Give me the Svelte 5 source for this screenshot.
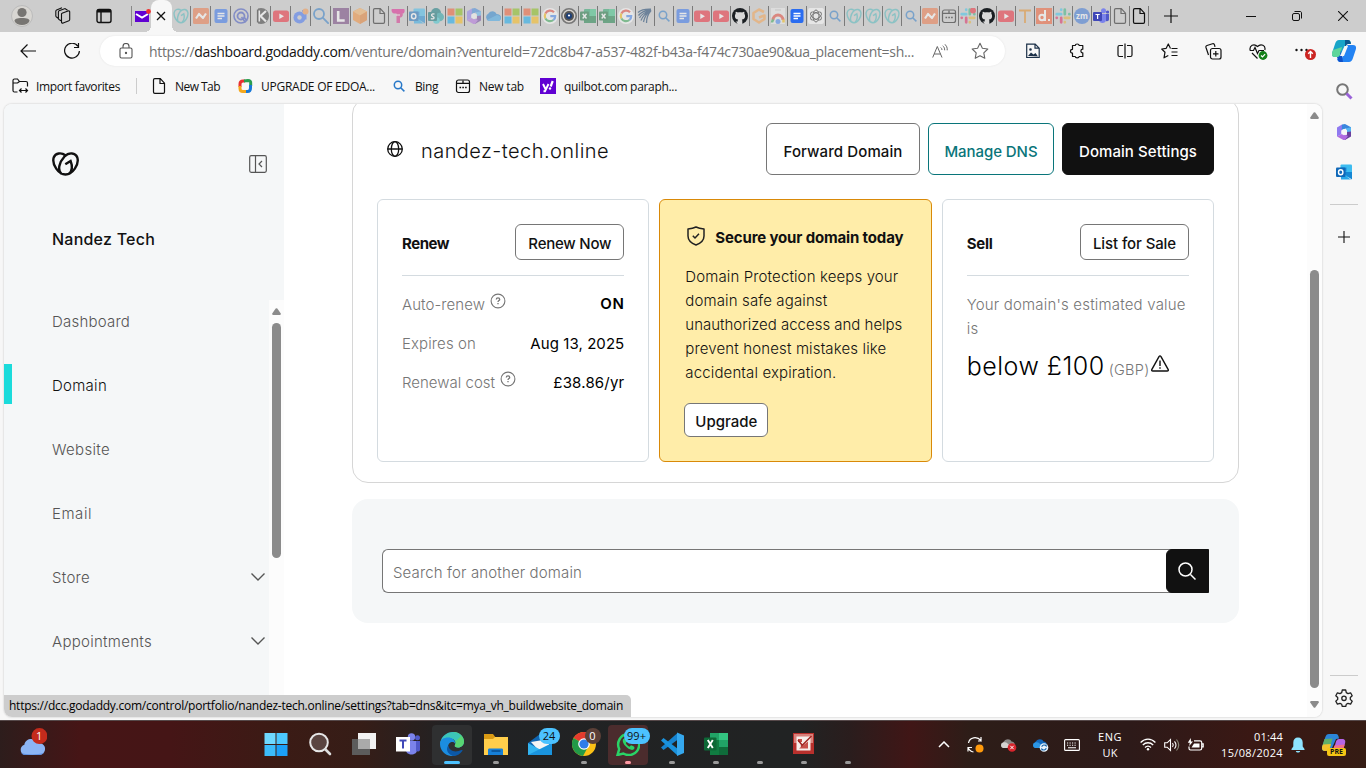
<script>
  const tabs = [
    'godaddy', 'nc', 'docs', 'quora', 'kcircle', 'youtube', 'dblue', 'searchbig', 'lpurple', 'cube',
    'page', 'tpink', 'outlook', 'sharepoint', 'windows', 'm365', 'onedrive', 'windows', 'windows', 'google',
    'eye!', 'excel', 'excel', 'google', 'wing', 'search', 'docs', 'youtube', 'youtube', 'github!',
    'gorange', 'webstore', 'docs!', 'openai', 'search', 'godaddy', 'godaddy', 'godaddy', 'search', 'nc',
    'newtab', 'slackdot', 'github!', 'youtube', 'torange', 'dred', 'slack', 'zoom', 'teams!', 'page', 'page!'
  ];
  const nav = [
    { label: 'Dashboard', w: 78 },
    { label: 'Domain', w: 55, active: true },
    { label: 'Website', w: 58 },
    { label: 'Email', w: 40 },
    { label: 'Store', w: 38, more: true },
    { label: 'Appointments', w: 100, more: true }
  ];
  const favorites = [
    { icon: 'page!', label: 'New Tab', w: 45, cell: 86 },
    { icon: 'ring', label: 'UPGRADE OF EDOA...', w: 114, cell: 154 },
    { icon: 'search!', label: 'Bing', w: 23, cell: 64 },
    { icon: 'newtab!', label: 'New tab', w: 45, cell: 85 },
    { icon: 'yahoo', label: 'quilbot.com paraph...', w: 113, cell: 150 }
  ];
  const apps = [
    { icon: 'start' }, { icon: 'find' }, { icon: 'taskview' }, { icon: 'teamsapp' },
    { icon: 'edge', state: 'active' }, { icon: 'folder', state: 'open' }, { icon: 'mailapp', badge: '24' },
    { icon: 'chrome', state: 'open', badge: '0', dark: true },
    { icon: 'whatsapp', state: 'alert', badge: '99+' },
    { icon: 'vscode', state: 'open' }, { icon: 'excelapp', state: 'open' }, { icon: '', state: 'open' },
    { icon: 'paint', state: 'open' }, { icon: '', state: 'open' }
  ];
  const copy = [
    ['Domain Protection keeps your', 213], ['domain safe against', 142],
    ['unauthorized access and helps', 217], ['prevent honest mistakes like', 201],
    ['accidental expiration.', 151]
  ];

  // Tracks a label so that it fills its set width.
  function fit(node, width) {
    const natural = node.getBoundingClientRect().width;
    node.style.letterSpacing = (width - natural) / node.textContent.length + 'px';
  }
</script>

{#snippet pic(name)}
  <svg viewBox="0 0 16 16" width="16" height="16" fill="none">
    {#if name === 'godaddy'}
      <g stroke="#4bb9bd" stroke-width="1.4"><path d="M8 2.3C5.6.4 2 1.2 1.2 4.3.3 8.700 4 14.700 8 14.700s7.700-6 6.800-10.400C14 1 9.800.5 7.200 3.500 4.500 6.700 3.800 12 5.300 13.800"/><path d="M8 7.600 10.800 5.800c1 3.200.2 6.200-1.500 8.300"/></g>
    {:else if name === 'nc'}
      <rect width="16" height="16" rx="1.500" fill="#ef7341"/><path d="M3 10.500 6 6l4 4 3-4.500" stroke="#fff" stroke-width="2.200" stroke-linejoin="round"/>
    {:else if name === 'docs'}
      <rect x="1.500" y="1" width="13" height="14" rx="2" fill="#2a6cf0"/><path d="M4.500 5.500h7M4.500 8h7M4.500 10.500h4.500" stroke="#fff" stroke-width="1.400"/>
    {:else if name === 'quora'}
      <g stroke="#3a4fc0"><circle cx="8" cy="8" r="7" stroke-width="1.600"/><circle cx="8" cy="8" r="3.500" stroke-width="1.800"/><path d="m8.500 9 4 5.500M11 9l3 4" stroke-width="1.600"/></g>
    {:else if name === 'kcircle'}
      <circle cx="8" cy="8" r="8" fill="#333"/><path d="M0 0h5v16H0z" fill="#cdcdcd"/><path d="M6 2.500v11M13 3 7.500 8l5.500 5.500" stroke="#fff" stroke-width="2.200"/><path d="M4.700 1.500v13" stroke="#222" stroke-width="1.600"/>
    {:else if name === 'youtube'}
      <rect y="2.500" width="16" height="11.500" rx="2.500" fill="#f02030"/><path d="m6.300 5.500 4.700 2.700-4.700 2.700z" fill="#fff"/>
    {:else if name === 'dblue'}
      <circle cx="6.500" cy="9.500" r="6" fill="#3c6ff5"/><circle cx="6.500" cy="9.500" r="2.200" fill="#ccc"/><path d="M9 3h3.500v8.500" stroke="#3c6ff5" stroke-width="2"/><circle cx="12.500" cy="3.500" r="3" fill="#f89548"/>
    {:else if name === 'searchbig'}
      <g stroke="#2878c8" stroke-width="1.800"><circle cx="6" cy="6" r="5"/><path d="m9.700 9.700 6 6"/></g>
    {:else if name === 'search'}
      <g stroke="#2878c8" stroke-width="1.500"><circle cx="7" cy="7" r="3.700"/><path d="m9.700 9.700 3.700 3.700"/></g>
    {:else if name === 'lpurple'}
      <rect width="16" height="16" fill="#6c3a78"/><path d="M5.200 3v9.500h6.500" stroke="#fff" stroke-width="2.600"/>
    {:else if name === 'cube'}
      <path d="m8 0 7 3.500v8.500l-7 4-7-4V3.500z" fill="#f58a30"/><path d="m1 3.500 7 4 7-4L8 0z" fill="#f9b15e"/><path d="m8 7.500 7-4V12l-7 4z" fill="#e67a28"/>
    {:else if name === 'page'}
      <path d="M2.500 2c0-.8.500-1.300 1.300-1.300h5.500l4.200 4.500V14c0 .8-.5 1.300-1.200 1.300H3.800c-.8 0-1.300-.5-1.300-1.300zM9 1v4.500h4.300" stroke="#111" stroke-width="1.200"/>
    {:else if name === 'tpink'}
      <path d="M2 1h12c1 0 1 4.500-1 4.500H4C1.500 5.500 1 1 2 1z" fill="#e2188e"/><path d="M6.500 5h6c1 2.500-.5 4.500-2.500 4.500V15H6.500z" fill="#d82888"/><path d="M6 7h4" stroke="#fff" stroke-width="1"/>
    {:else if name === 'outlook'}
      <rect x="4.500" y=".5" width="11.500" height="13" rx="1" fill="#3dbcf0"/><path d="M4.500 3.500h6v4h-6z" fill="#1a8fdc"/><path d="m5 8 11 7.500V8z" fill="#1487d4"/><path d="M5 15.500V9l10 6.500z" fill="#28a8ea"/><rect y="3.500" width="9.500" height="9.500" rx="1" fill="#0f68b8"/><ellipse cx="4.700" cy="8.300" rx="2.200" ry="2.500" stroke="#fff" stroke-width="1.400"/>
    {:else if name === 'sharepoint'}
      <circle cx="8" cy="5" r="5" fill="#057478"/><circle cx="11.700" cy="9" r="4.300" fill="#1aa1a5"/><circle cx="8.500" cy="12.500" r="3.300" fill="#37c6d0"/><rect y="4" width="9" height="9" rx="1" fill="#036c70"/><path d="M6.500 6.200C4 5 2.500 7 4.500 8.300c2.500 1 2 3.300-1.700 2.300" stroke="#fff" stroke-width="1.300"/>
    {:else if name === 'windows'}
      <path d="M.5.500h7v7h-7z" fill="#f35325"/><path d="M8.500.500h7v7h-7z" fill="#81bc06"/><path d="M.5 8.500h7v7h-7z" fill="#05a6f0"/><path d="M8.500 8.500h7v7h-7z" fill="#ffba08"/>
    {:else if name === 'm365'}
      <path d="M6 .6 1 3.500v9L6 10V5.500z" fill="#8f7af0"/><path d="M6 .6 9 0l6 3.300v3.500L9.500 4.500 5.800 6z" fill="#3a86dd"/><path d="M9.500 4.500 15 3.300v9l-4-2V6.500z" fill="#55b5f2"/><path d="M15 7.500v5L9 16l-2.500-1 4.500-4.500V8z" fill="#6b3f9e"/><path d="M1 12.500 7.500 16H9l3-4-3-1.300-3-.7z" fill="#b06be0"/><path d="m8 4.900 2.800 1.600v3.200L8 11.300 5.200 9.700V6.500z" fill="#f7f7f7"/>
    {:else if name === 'onedrive'}
      <path d="M4 13a4 4 0 0 1-.5-7.500C5.500 2.500 10 2.500 11.500 6 15 6 16.500 8.500 16 10.500c-.4 1.500-1.500 2.500-3 2.500z" fill="#2080d0"/><path d="M2 12 12 7c4 .5 5 4 2 6H4z" fill="#38a5ea"/>
    {:else if name === 'google'}
      <circle cx="8" cy="8" r="8" fill="#fff"/><g stroke-width="2.200"><path d="M12 4.300A5.300 5.300 0 0 0 3.400 5.500" stroke="#ea4335"/><path d="M3.400 5.500a5.300 5.300 0 0 0 0 5" stroke="#fbbc05"/><path d="M3.400 10.500a5.300 5.300 0 0 0 8 1.500" stroke="#34a853"/><path d="M11.400 12A5 5 0 0 0 13.200 8.200H8.300" stroke="#4285f4"/></g>
    {:else if name === 'eye'}
      <circle cx="8" cy="8" r="7.200" stroke="#777" stroke-width="1.600" fill="#d8d4d0"/><circle cx="8" cy="8" r="5" fill="#555"/><circle cx="8" cy="8" r="3" fill="#1d3f78"/><circle cx="8" cy="7.500" r="1.100" fill="#fff"/>
    {:else if name === 'excel'}
      <rect x="4" y="1" width="12" height="14" rx="1" fill="#21a366"/><path d="M10 1h6v7h-6z" fill="#33c481"/><path d="M4 8h12v7H4z" fill="#107c41"/><rect y="3.500" width="9" height="9" rx="1" fill="#0f7038"/><path d="m2.700 5.700 3.800 4.800m0-4.800-3.800 4.800" stroke="#fff" stroke-width="1.400"/>
    {:else if name === 'wing'}
      <g stroke="#0d3a68" stroke-width="1.300"><path d="M1 4.500C5 1 9 1 14 1.200M1.500 7.500C5 3 9 2.500 14 1.500M2.500 10C5 5.500 9 3.500 14 2M4 12.500C6 7.500 9 4.500 14 2M6.500 14C7.500 9 10 5 14 2M9.500 15c0-4 1.500-9 4.500-12.500"/></g>
    {:else if name === 'github'}
      <circle cx="8" cy="8" r="8" fill="#1b1f23"/><path d="M5.700 16v-2.600c-1.800.3-2.300-.5-2.800-1.500M10.300 16v-3c0-.8-.1-1.200-.5-1.500 2.300-.3 3.300-1.500 3.300-3.600 0-.9-.3-1.600-.8-2.200.2-.6.200-1.400-.1-2-.8 0-1.500.400-2.100.8-1.300-.3-2.900-.3-4.200 0-.6-.4-1.300-.8-2.100-.8-.3.600-.3 1.400-.1 2-.5.600-.8 1.300-.8 2.200 0 2.100 1 3.300 3.300 3.600-.4.300-.5.800-.5 1.500v3z" fill="#d8d8d8"/>
    {:else if name === 'gorange'}
      <path d="M13 4 8 1.500 2.500 5v6L8 14.500l5.500-3.500V7.500L8 9.500" stroke="#f8a04a" stroke-width="2.600" stroke-linejoin="round"/>
    {:else if name === 'webstore'}
      <path d="M1 0h14v16H1z" fill="#eee"/><path d="M5 2h6" stroke="#bbb"/><path d="M3 12a5 5 0 0 1 10 0" stroke="#e84335" stroke-width="3"/><path d="M2 14.500c0-1 .5-2 1.500-3" stroke="#34a853" stroke-width="2.500"/><path d="M13.500 11.500v3" stroke="#fbbc05" stroke-width="2.500"/><circle cx="8" cy="13.500" r="2.500" fill="#4285f4"/>
    {:else if name === 'openai'}
      <rect width="16" height="16" rx="2" fill="#fff"/><g stroke="#222" stroke-width="1"><ellipse cx="8" cy="8" rx="3" ry="6"/><ellipse cx="8" cy="8" rx="3" ry="6" transform="rotate(60 8 8)"/><ellipse cx="8" cy="8" rx="3" ry="6" transform="rotate(120 8 8)"/></g>
    {:else if name === 'newtab'}
      <rect x="1.500" y="2" width="13" height="12.500" rx="2" stroke="#111" stroke-width="1.200"/><path d="M2 5.300h6V2.500M8 5.300h6.500M4.500 9.500h1.600m1.200 0h1.600m1.200 0h1.600" stroke="#111" stroke-width="1.300"/>
    {:else if name === 'slack' || name === 'slackdot'}
      <g stroke-width="2.700" stroke-linecap="round"><path d="M1.700 6.200h4.500M6.200 1.700v.1" stroke="#36c5f0"/><path d="M9.800 1.700v4.500M14.300 6.200h.1" stroke="#2eb67d"/><path d="M9.800 9.800h4.500M9.800 14.200v.1" stroke="#ecb22e"/><path d="M6.200 9.800v4.500M1.700 9.800h.1" stroke="#e01e5a"/></g>
      {#if name === 'slackdot'}<circle cx="13" cy="2.500" r="3" fill="#f02030"/>{/if}
    {:else if name === 'torange'}
      <path d="M2 2.500h12M8 2.500V15" stroke="#e68a1c" stroke-width="1.800"/>
    {:else if name === 'dred'}
      <rect width="16" height="16" fill="#f3562a"/><circle cx="6" cy="9.500" r="2.700" stroke="#fff" stroke-width="2"/><path d="M9 2v11M12 12h2" stroke="#fff" stroke-width="2"/>
    {:else if name === 'zoom'}
      <circle cx="8" cy="8" r="8" fill="#3270d8"/><text x="8" y="10.800" text-anchor="middle" class="zm">zm</text>
    {:else if name === 'teams'}
      <circle cx="10.500" cy="2.800" r="2.500" fill="#7b83eb"/><circle cx="14.500" cy="4" r="1.600" fill="#5059c9"/><path d="M6 6h7v6c0 4-7 4-7 0z" fill="#7b83eb"/><path d="M13 6h3v5c0 2-1.500 2.500-3 2z" fill="#5059c9"/><rect y="4" width="9" height="9" rx="1" fill="#4048b8"/><path d="M2.500 6.500H6.700M4.600 6.500v4.500" stroke="#fff" stroke-width="1.200"/>
    {:else if name === 'ring'}
      <g stroke-width="3"><path d="M3 9V6c0-2 1-3 3-3h2" stroke="#e83030"/><path d="M7 3l4-.5c2 0 3 1 2.700 3V8" stroke="#2a9d50"/><path d="M13.500 7v3c0 2-1 3.500-3 3.500H8" stroke="#1878d8"/><path d="M9 13.500H6c-2 0-3-1-3-3V8" stroke="#f5a81c"/></g>
    {:else if name === 'yahoo'}
      <rect width="16" height="16" fill="#6001d2"/><path d="m3 6 2.500 5M8.500 6 5 13.200H3.500" stroke="#fff" stroke-width="1.900"/><path d="m12.700 3-2 5.500" stroke="#fff" stroke-width="2.200"/><circle cx="10" cy="10.500" r="1.200" fill="#fff"/>
    {/if}
  </svg>
{/snippet}

{#snippet app(name)}
  <svg viewBox="0 0 24 24" width="24" height="24" fill="none">
    {#if name === 'start'}
      <path d="M.5 1h11v11H.500z" fill="#6ed8ff"/><path d="M12.500 1h11v11h-11z" fill="#4cc8ff"/><path d="M.5 13h11v11H.500z" fill="#3cbcfb"/><path d="M12.500 13h11v11h-11z" fill="#1ba0f8"/>
    {:else if name === 'find'}
      <circle cx="11" cy="10.500" r="8.800" stroke="#e6e6e6" stroke-width="2" fill="#5a4440"/><path d="m17.500 17.500 4.500 4.500" stroke="#ddd" stroke-width="2.600" stroke-linecap="round"/>
    {:else if name === 'taskview'}
      <path d="M6 1h18v16H6z" fill="#f2f2f2"/><path d="M0 7h18v16H0z" fill="#5c5c5c"/><path d="M6 7h12v10H6z" fill="#aaa"/>
    {:else if name === 'teamsapp'}
      <circle cx="15.500" cy="5" r="3.700" fill="#7b83eb"/><circle cx="21.500" cy="5.700" r="2.500" fill="#5059c9"/><path d="M10 9h11v9c0 6-11 6-11 0z" fill="#7b83eb"/><path d="M20 9h4.500v7c0 3-2 4-4.500 3z" fill="#5059c9"/><path d="M0 5h14v14.500H0z" fill="#fff"/><path d="M3.500 8.500h7M7 8.500v8" stroke="#4048b8" stroke-width="2"/>
    {:else if name === 'edge'}
      <path d="M0 12C1 3 8 0 13 0c7 0 11 5 11 9.500 0 3.500-2.500 6-6 6-2.500 0-4-1-3-2.500C17 9 13 6 9 6.500 5 7 1.500 9 0 12z" fill="#36c0cf"/><path d="M14 0c6 .5 10 5 10 9.500 0 3.500-2.500 6-6 6-2.500 0-4-1-3-2.500 1.500-2.500.5-4.500-1-6z" fill="#58d673"/><path d="M9 1c5-2 10 0 12 3l-5 5C13 5 7 4.500 2.500 7.500 4 4 6 2 9 1z" fill="#3cc6b8"/><path d="M0 12c0-4.500 4-6.500 8-6.500 4.500 0 7.500 3 7 6C13 8.500 8 10.500 8 15c0 5 4 8.500 8 8.500C7 26 0 19.500 0 12z" fill="#1b8de0"/><path d="M8.500 13.500C9 19 15 21 21.500 18c.7-.3 1.300.2.8 1-2 3-5.500 5-9.500 5C7 22 5.500 16 8.500 13.500z" fill="#0c58a6"/>
    {:else if name === 'folder'}
      <path d="M0 2h9l3 4h12v17H0z" fill="#d99a14"/><path d="M0 7h9l2-2h13v18H0z" fill="#ffce4b"/><path d="M4 23v-5c0-1 .5-1.500 1.500-1.500h12c1 0 1.500.5 1.500 1.500v5z" fill="#1680d8"/><path d="M7.500 19h9" stroke="#084e90" stroke-width="1.500"/>
    {:else if name === 'mailapp'}
      <path d="M0 11 12 2l12 9v12H0z" fill="#1065b0"/><path d="m3 10 18-3v8l-9 5z" fill="#f5f5f5"/><path d="m0 11 13 7 11-7v12H0z" fill="#33b4f0"/><path d="m0 23 24-12v12z" fill="#1a94de"/>
    {:else if name === 'chrome'}
      <circle cx="12" cy="12" r="12" fill="#fbc116"/><path d="M12 12 1.600 6a12 12 0 0 1 20.800 0z" fill="#e33b2e"/><path d="m12 12-10.400-6A12 12 0 0 0 11 24l5-9z" fill="#229a48"/><path d="M12 6h10.400L12 12z" fill="#e33b2e"/><circle cx="12" cy="12" r="5.800" fill="#fff"/><circle cx="12" cy="12" r="4.600" fill="#2f7de9"/>
    {:else if name === 'whatsapp'}
      <path d="m1.500 23 1.700-6A10.500 10.500 0 1 1 7.300 21.500z" stroke="#29d366" stroke-width="2.500"/><path d="M8 6.500c-2 1-1.500 4 1 7s6 5 8 4.300 2-3 0-3.700l-2-.8-1.500 1.500c-2-1-3-2-3.700-3.700l1.200-1.500L10 7c-.3-.7-1-.8-2-.5z" fill="#29d366"/>
    {:else if name === 'vscode'}
      <path d="M17.500 1 1 15.500l2.500 2.500L20 6z" fill="#1683cf"/><path d="M17.500 23.500 1 8.500 3.500 6 20 18.500z" fill="#1a92dd"/><path d="m17 .5 7 3v17.500l-7 3z" fill="#35a8ee"/>
    {:else if name === 'excelapp'}
      <path d="M6 1h18v22H6z" fill="#21a366"/><path d="M15 1h9v7h-9z" fill="#33c481"/><path d="M6 8h9v15H6z" fill="#107c41"/><path d="M15 15h9v8h-9z" fill="#0f6b3a"/><rect y="5.500" width="12.500" height="13" rx="1" fill="#0d6836"/><path d="m3.800 8 5 8m0-8-5 8" stroke="#fff" stroke-width="1.900"/>
    {:else if name === 'paint'}
      <path d="M1 1h21v21H1z" fill="#b8302c"/><path d="M2 2h19v9H2z" fill="#d8807a"/><path d="M4.500 4.500h14v14h-14z" fill="#f6eeea"/><path d="M6 7h4v3H6zM7 16.500l9-7v7z" fill="#c8504a"/><path d="M19.500 4 9 14.500M6 8l4 5" stroke="#a02420" stroke-width="1.500"/>
    {/if}
  </svg>
{/snippet}

{#snippet tabPic(name)}
  {@render pic(name.replace('!', ''))}
{/snippet}

{#snippet help()}
  <svg class="help" viewBox="0 0 16 16" width="16" height="16" fill="none" stroke="#767676"><circle cx="8" cy="8" r="6.900" stroke-width="1.100"/><path d="M6.300 6.600c0-1.100.7-1.700 1.700-1.700s1.700.6 1.700 1.500c0 1.200-1.700 1.200-1.700 2.500M8 10v1.200" stroke-width="1.300"/></svg>
{/snippet}

{#snippet copilot()}
  <svg viewBox="0 0 24 22" width="24" height="22"><path d="M7 0h9c2 0 2.500 1.500 3 3l-5 1-4 11c-.6 1.500-1.500 2-3 2H3c-3 0-3.500-2-2.800-4.500l3-9C4 1.200 5 0 7 0z" fill="#18a5c8"/><path d="m1 10 9-3-2 8c-.6 1.500-1.500 2-3 2H3c-3 0-3.500-2-2.800-4.500z" fill="#5fd69a"/><path d="M17 22H8c-2 0-2.500-1.500-3-3l5-1 4-11c.6-1.500 1.500-2 3-2h4c3 0 3.500 2 2.800 4.500l-3 9C20 20.800 19 22 17 22z" fill="#2383f3"/><path d="M13 0h3c2 0 2.500 1.500 3 4h-2c-1.500 0-2.400.5-3 2l-1 2z" fill="#0a5990"/><path d="m9 10-1 5c-.6 1.500-1 2-3 2l1 3c.5 1.500 1.500 2 3 2h2z" fill="#0f50c8"/><path d="M12.500 6h3.500l-4 10H8z" fill="#f7f7f7"/></svg>
{/snippet}

<div class="screen">
  <div class="tabbar">
    <div class="profile">
      <svg viewBox="0 0 22 22" width="22" height="22"><circle cx="11" cy="11" r="10.500" fill="#d8d6d2" stroke="#bbb"/><circle cx="11" cy="7.500" r="4.600" fill="#777572"/><path d="M3.500 16c0-2 2-3 7.500-3s7.500 1 7.500 3c-1 2.500-4 4-7.500 4s-6.500-1.500-7.500-4z" fill="#777572"/></svg>
    </div>
    <svg class="spaces" viewBox="0 0 18 18" width="18" height="18" fill="none" stroke="#111" stroke-width="1.100"><path d="m9 6.300 6-2.300c1-.3 1.700.1 1.700 1v7.500c0 .7-.3 1-.8 1.200l-5.700 2.300c-1 .4-1.700 0-1.700-1V7c0-.4.2-.6.500-.7zM8.500 14 6 12.500c-.4-.3-.6-.6-.6-1V5c0-.6.2-1 .7-1.200L12 1.500l2.500 1.800M5.500 11.500l-2-1.500c-.5-.4-.7-.7-.7-1.300V4.200c0-.6.300-1 .8-1.200L9 .8"/></svg>
    <svg class="panel" viewBox="0 0 16 16" width="16" height="16" fill="none" stroke="#111" stroke-width="1.400"><rect x="1" y="1.500" width="14" height="13" rx="2"/><path d="M1 3h14" stroke-width="3"/><path d="M5 4v10"/></svg>
    <div class="mailtab">
      <svg viewBox="0 0 17 14" width="17" height="14"><path d="M1 2h14v11H1z" fill="#6001d2"/><path d="m2 5 6 3.500L14 5" stroke="#fff" stroke-width="2" fill="none"/><circle cx="14.500" cy="2.500" r="2.400" fill="#f03030"/></svg>
    </div>
    <div class="current">
      <svg viewBox="0 0 10 10" width="10" height="10" stroke="#111" stroke-width="1.300"><path d="m1 1 8 8M9 1 1 9"/></svg>
    </div>
    {#each tabs as t, i}
      <div class="tab" class:wide={i > 0 && i < 9} class:vivid={t.endsWith('!')}>{@render tabPic(t)}</div>
    {/each}
    <svg class="plus" viewBox="0 0 14 14" width="14" height="14" stroke="#111" stroke-width="1.200"><path d="M7 0v14M0 7h14"/></svg>
    <div class="wincontrols">
      <svg viewBox="0 0 10 10" width="10" height="10" stroke="#111"><path d="M0 5.500h10"/></svg>
      <svg viewBox="0 0 10 10" width="10" height="10" fill="none" stroke="#111"><rect x=".5" y="2.500" width="7" height="7" rx="1.500"/><path d="M2.500.500H8c1 0 1.500.5 1.500 1.500v5.500"/></svg>
      <svg viewBox="0 0 10 10" width="10" height="10" stroke="#111" stroke-width="1.100"><path d="m0 0 10 10M10 0 0 10"/></svg>
    </div>
  </div>

  <div class="toolbar">
    <svg class="back" viewBox="0 0 16 14" width="16" height="14" fill="none" stroke="#111" stroke-width="1.200"><path d="M16 7H1M7.500.500 1 7l6.500 6.500"/></svg>
    <svg class="reload" viewBox="0 0 16 16" width="16" height="16" fill="none" stroke="#111" stroke-width="1.200"><path d="M14 3.300A7.400 7.400 0 1 0 15.400 8M14.500 0v4.500H10"/></svg>
    <div class="address">
      <svg viewBox="0 0 14 16" width="14" height="16" fill="none" stroke="#555" stroke-width="1.100"><rect x="1" y="5" width="12" height="10" rx="1.500"/><path d="M4 5V3.500a3 3 0 0 1 6 0V5"/><circle cx="7" cy="10" r=".6" fill="#555"/></svg>
      <span class="url"><span use:fit={765}>https://<b>dashboard.godaddy.com</b>/venture/domain?ventureId=72dc8b47-a537-482f-b43a-f474c730ae90&amp;ua_placement=sh...</span></span>
      <svg class="read" viewBox="0 0 16 14" width="16" height="14" fill="none" stroke="#666" stroke-width="1"><path d="m.7 13.500 4.600-11 4.700 11M2.200 10h6.200M8.700 3.500c.8.500 1.200 1.400 1.300 2.500M10.700 1.800c1.300 1 2 2.400 2 4.500M12.500 0c2 1.500 3 3.700 2.700 6.300"/></svg>
      <svg viewBox="0 0 18 18" width="18" height="18" fill="none" stroke="#666" stroke-width="1.100" stroke-linejoin="round"><path d="m9 1.300 2.400 5 5.400.7-4 3.800 1 5.500L9 13.700l-4.800 2.600 1-5.500-4-3.800 5.400-.7z"/></svg>
    </div>
    <div class="tools">
      <svg class="t1" viewBox="0 0 16 16" width="16" height="16" fill="none" stroke="#1b3048" stroke-width="1.200"><path d="M1.700 1.200h8.500l4 4v9.300H1.700zM10 1.200v4h4"/><path d="m3 13 3-3.500 2.500 2 2-1.500L13 13.500z" fill="#1b3048" stroke="none"/><circle cx="5.500" cy="6.500" r=".7"/></svg>
      <svg class="t2" viewBox="0 0 16 16" width="16" height="16" fill="none" stroke="#111" stroke-width="1.200" stroke-linejoin="round"><path d="M3.500 2.500H6.200c.2-2 3.800-2 4 0h3.600v3.700c-2.500-.3-2.500 3.900 0 3.600v3.700h-3.600c-.2 1.800-3.800 1.800-4 0H3.500V10C.8 10 .8 6.300 3.500 6.300z"/></svg>
      <i></i>
      <svg class="t3" viewBox="0 0 16 16" width="16" height="16" fill="none" stroke="#111" stroke-width="1.200"><path d="M6 2.500H2.500c-1 0-1.500.5-1.500 1.500v8c0 1 .5 1.500 1.500 1.500H6M10 2.500h3.500c1 0 1.500.5 1.500 1.500v8c0 1-.5 1.500-1.500 1.500H10M8 .500v15"/></svg>
      <svg class="t4" viewBox="0 0 17 16" width="17" height="16" fill="none" stroke="#111" stroke-width="1.200" stroke-linejoin="round"><path d="M9.500 5.500 7.300 1 5.200 5.300.7 6l3.300 3.200-1 5.600 4.300-2.300M10.500 5.500h6M10.500 9h6M10.500 12.500h6"/></svg>
      <svg class="t5" viewBox="0 0 17 17" width="17" height="17" fill="none" stroke="#111" stroke-width="1.200"><rect x="5.500" y="5.500" width="10.500" height="10.500" rx="2"/><path d="M10.800 8v5.500M8 10.800h5.500M3.500 12 1 4.500c-.3-1 0-1.700 1-2L7.500.800c1-.3 1.700 0 2 1l.5 2"/></svg>
      <svg class="t6" viewBox="0 0 19 17" width="19" height="17" fill="none" stroke="#111" stroke-width="1.200"><path d="M1.200 7.500C0 2.500 5 0 8.500 3.500 12 0 17 2.500 15.800 7M1 7.500h3.500L6 4.500l2.500 6 1.500-3h5M3 10l5.500 5.500"/><circle cx="14" cy="12.500" r="4.400" fill="#138018" stroke="none"/><path d="m12 12.500 1.500 1.500 2.600-2.800" stroke="#fff"/></svg>
      <svg class="t7" viewBox="0 0 22 17" width="22" height="17"><g fill="#111"><circle cx="2.500" cy="7" r="1.200"/><circle cx="7.500" cy="7" r="1.200"/><circle cx="12.500" cy="7" r="1.200"/></g><circle cx="16.500" cy="11.500" r="5.500" fill="#cc2522"/><path d="M16.500 15V8.500m-2.300 2.300 2.300-2.300 2.300 2.300" fill="none" stroke="#fff" stroke-width="1.400"/></svg>
    </div>
    <span class="copilot">{@render copilot()}</span>
  </div>

  <div class="favbar">
    <div class="imp">
      <svg viewBox="0 0 17 16" width="17" height="16" fill="none" stroke="#111" stroke-width="1.200"><path d="M5.500 14H2.500C1.500 14 1 13.500 1 12.500V2.500C1 1.500 1.500 1 2.500 1h3l2 2.500H14c1 0 1.500.5 1.500 1.500v3.500M1 5h4.500l2-1.500M7.500 12.500h8M9.500 10.500l-2 2 2 2M13.500 10.500l2 2-2 2"/></svg>
      <span use:fit={84}>Import favorites</span>
    </div>
    {#each favorites as f}
      <div class="fav" style:width="{f.cell}px">{@render tabPic(f.icon)}<span use:fit={f.w}>{f.label}</span></div>
    {/each}
  </div>

  <div class="middle">
    <div class="page">
      <aside>
        <div class="brand">
          <svg viewBox="0 0 27 24" width="27" height="24" fill="none" stroke="#111" stroke-width="2.400"><path d="M13.300 3.300C9.500.2 3.500.8 1.700 5.500-.3 12.500 6.500 22.500 13.500 22.500s14-10 11.800-17C23.500.500 17 0 12.500 4.500 7 10.500 5.300 18 9.500 21.800"/><path d="M13.300 12.300 18.600 9c2 5 1.400 10-1.600 13"/></svg>
          <svg viewBox="0 0 18 18" width="18" height="18" fill="none" stroke="#555" stroke-width="1.200"><rect x=".7" y=".7" width="16.600" height="16.600" rx="1.500"/><path d="M6.500 1v16M13 6l-3 3 3 3"/></svg>
        </div>
        <h2><span use:fit={103}>Nandez Tech</span></h2>
        <div class="navwrap">
          <nav>
            {#each nav as n}
              <div class="item" class:active={n.active}>
                <span use:fit={n.w}>{n.label}</span>
                {#if n.more}<svg viewBox="0 0 14 8" width="14" height="8" fill="none" stroke="#555" stroke-width="1.400"><path d="m.5.500 6.500 6.500L13.500.500"/></svg>{/if}
              </div>
            {/each}
          </nav>
          <div class="track small"><svg viewBox="0 0 9 7" width="9" height="7"><path d="M3.700.600.200 5.600Q0 7 1.300 7h6.400Q9 7 8.800 5.600L5.300.600Q4.500-.3 3.700.600z" fill="#8b8b8b"/></svg><div class="thumb"></div></div>
        </div>
      </aside>
      <main>
        <section class="domain">
          <header>
            <svg viewBox="0 0 16 16" width="16" height="16" fill="none" stroke="#111" stroke-width="1.300"><circle cx="8" cy="8" r="7.300"/><ellipse cx="8" cy="8" rx="3.700" ry="7.300"/><path d="M.7 8h14.600"/></svg>
            <h1><span use:fit={188}>nandez-tech.online</span></h1>
            <button class="fwd"><span use:fit={119}>Forward Domain</span></button>
            <button class="dns"><span use:fit={93}>Manage DNS</span></button>
            <button class="set"><span use:fit={118}>Domain Settings</span></button>
          </header>
          <div class="boxes">
            <article>
              <div class="head"><h3><span use:fit={47}>Renew</span></h3><button class="renew"><span use:fit={83}>Renew Now</span></button></div>
              <dl>
                <div><dt><span use:fit={83}>Auto-renew</span>{@render help()}</dt><dd class="on"><span use:fit={24}>ON</span></dd></div>
                <div><dt><span use:fit={74}>Expires on</span></dt><dd><span use:fit={94}>Aug 13, 2025</span></dd></div>
                <div><dt><span use:fit={93}>Renewal cost</span>{@render help()}</dt><dd><span use:fit={71}>£38.86/yr</span></dd></div>
              </dl>
            </article>
            <article class="secure">
              <div class="title">
                <svg viewBox="0 0 20 20" width="20" height="20" fill="none" stroke="#222" stroke-width="1.500" stroke-linejoin="round"><path d="M10 1c2.500 1.200 5 1.700 8 2v7c0 4-3.500 7.300-8 9-4.500-1.700-8-5-8-9V3c3-.3 5.500-.8 8-2z"/><path d="m6.800 9.800 2.200 2.200 4-4.200"/></svg>
                <h3><span use:fit={188}>Secure your domain today</span></h3>
              </div>
              <p>{#each copy as [line, w]}<span class="line"><span use:fit={w}>{line}</span></span>{/each}</p>
              <button class="up"><span use:fit={62}>Upgrade</span></button>
            </article>
            <article>
              <div class="head"><h3><span use:fit={26}>Sell</span></h3><button class="list"><span use:fit={83}>List for Sale</span></button></div>
              <p class="est"><span class="line"><span use:fit={219}>Your domain's estimated value</span></span><span class="line"><span use:fit={12}>is</span></span></p>
              <div class="value">
                <strong><span use:fit={138}>below £100</span></strong>
                <small><span use:fit={41}>(GBP)</span></small>
                <svg viewBox="0 0 18 17" width="18" height="17" fill="none" stroke="#111" stroke-width="1.400" stroke-linejoin="round"><path d="M8 1.600.9 14.300q-.7 1.700 1 1.700h14.200q1.700 0 1-1.700L10 1.600q-1-1.400-2 0zM9 5.500v5.500M9 12.300v1.500"/></svg>
              </div>
            </article>
          </div>
        </section>
        <section class="find">
          <div class="field"><span use:fit={189}>Search for another domain</span></div>
          <button class="go"><svg viewBox="0 0 18 18" width="18" height="18" fill="none" stroke="#fff" stroke-width="1.500"><circle cx="7.500" cy="7.500" r="6.500"/><path d="m12.500 12.500 5 5"/></svg></button>
        </section>
      </main>
      <div class="track big">
        <svg viewBox="0 0 9 7" width="9" height="7"><path d="M3.700.600.200 5.600Q0 7 1.300 7h6.400Q9 7 8.800 5.600L5.300.600Q4.500-.3 3.700.600z" fill="#8b8b8b"/></svg>
        <div class="thumb"></div>
        <svg viewBox="0 0 9 7" width="9" height="7"><path d="M3.700 6.400.200 1.400Q0 0 1.300 0h6.400Q9 0 8.800 1.400L5.300 6.400Q4.500 7.300 3.700 6.400z" fill="#8b8b8b"/></svg>
      </div>
      <div class="status"><span use:fit={614}>https://dcc.godaddy.com/control/portfolio/nandez-tech.online/settings?tab=dns&amp;itc=mya_vh_buildwebsite_domain</span></div>
    </div>
    <div class="rail">
      {@render railIcons()}
    </div>
  </div>

  <div class="taskbar">
    <div class="weather">
      <svg viewBox="0 0 26 26" width="28" height="28"><path d="M5 25a5 5 0 0 1 0-9.500c1-6.500 10-7 12.500-1.500 5 0 7.500 3 6.500 7-.6 2.500-2.500 4-5 4z" fill="#8cb5f5"/><path d="M2 23c4 2 16 2 21 0-1 1.500-2.500 2-4 2H5c-1 0-2-.5-3-2z" fill="#5f8fe0"/><circle cx="19" cy="7.500" r="7.400" fill="#c42b1c"/></svg>
      <em>1</em>
    </div>
    <div class="apps">
      {#each apps as a}
        <div class="app {a.state ?? ''}">
          {@render app(a.icon)}
          {#if a.badge}<em class:dark={a.dark} class:long={a.badge.length > 2}>{a.badge}</em>{/if}
        </div>
      {/each}
    </div>
    <div class="tray">
      <svg viewBox="0 0 12 7" width="12" height="7" fill="none" stroke="#fff" stroke-width="1.500"><path d="m1 6 5-5 5 5"/></svg>
      <svg class="sync" viewBox="0 0 17 17" width="17" height="17" fill="none" stroke="#fff" stroke-width="1.200"><path d="M1.500 7C2.500 1 10 0 14 4.500V1M14.500 5H11M1 15.500v-4h4M1 11.500C2 14 3.500 15.500 6.500 16"/><circle cx="12.500" cy="12.500" r="4" fill="#ff9a0c" stroke="none"/></svg>
      <svg class="c1" viewBox="0 0 17 14" width="17" height="14"><path d="M3 10a2.900 2.900 0 0 1 0-5.500C5 .5 10 0 11.500 3.500 15 3.500 16 8 13.500 10z" fill="#8b8886"/><path d="M3 10a2.900 2.900 0 0 1 0-5.500c3-1 5 .5 9 5.500z" fill="#d5d2d0"/><circle cx="12" cy="9.500" r="4.300" fill="#d8242c"/><path d="m10.300 7.800 3.400 3.400m0-3.400-3.400 3.400" stroke="#fff"/></svg>
      <svg class="c2" viewBox="0 0 17 14" width="17" height="14"><path d="M3 10a2.900 2.900 0 0 1 0-5.500C5 .5 10 0 11.500 3.500 15 3.500 16 8 13.500 10z" fill="#1268bc"/><path d="M3 10a2.900 2.900 0 0 1 0-5.500c3-1 5 .5 9 5.500z" fill="#2c96e4"/><circle cx="12" cy="9.500" r="4.300" fill="#e8f3fc"/><path d="M9.700 8.700a2.600 2.600 0 0 1 4.400-.8V6.500M14.300 10.300a2.600 2.600 0 0 1-4.400.8v1.400" fill="none" stroke="#1060a8" stroke-width="1.100"/></svg>
      <svg class="kb" viewBox="0 0 16 12" width="16" height="12" fill="none" stroke="#fff" stroke-width="1.100"><rect x=".6" y=".6" width="14.800" height="10.800" rx="1"/><path d="M3 4h1.200m1.300 0h1.200m1.300 0h1.200m1.300 0h1.200M3 6.300h1.200m1.300 0h1.200m1.300 0h1.200m1.300 0h1.200M4 8.700h8"/></svg>
      <div class="lang"><span use:fit={24}>ENG</span><span use:fit={15}>UK</span></div>
      <svg class="wifi" viewBox="0 0 16 13" width="16" height="13" fill="none" stroke="#fff" stroke-width="1.300"><path d="M.6 4.500C5 0 11 0 15.400 4.500M2.800 7c3-3 7.400-3 10.400 0M5 9.500c1.800-1.700 4.200-1.700 6 0"/><circle cx="8" cy="11.300" r="1.200" fill="#fff" stroke="none"/></svg>
      <svg class="vol" viewBox="0 0 16 14" width="16" height="14" fill="none" stroke="#fff" stroke-width="1.100"><path d="M.7 4.800h2.500L6.500 1.500v11L3.200 9.200H.700zM8.500 5q1.500 2 0 4M10.500 3.300q3 3.700 0 7.400"/><path d="M12.500 1.500q4.500 5.500 0 11" stroke="#887"/></svg>
      <svg class="bat" viewBox="0 0 17 13" width="17" height="13" fill="none" stroke="#fff" stroke-width="1.200"><path d="M7 2.800h6c1 0 1.700.6 1.700 1.500v6c0 1-.7 1.700-1.700 1.700H3.500C2.500 12 2 11.300 2 10.300V8.500M15 5.800h1.200v3H15"/><path d="M3.700 0 .8 4.700h2L2.200 8 6 3.500H4z" fill="#fff" stroke="none"/><path d="M7 5.500h5.500v4H4.500z" fill="#fff"  stroke="none"/></svg>
      <div class="clock"><span use:fit={29}>01:44</span><span use:fit={62}>15/08/2024</span></div>
      <svg class="bell" viewBox="0 0 14 16" width="14" height="16" fill="#8ee4ff"><path d="M7 .500c3 0 4.700 2 4.700 5v4L13.500 12v1H.500v-1l1.800-2.500v-4c0-3 1.700-5 4.700-5zM4.800 14h4.400c-.5 2-3.900 2-4.400 0z"/></svg>
      <div class="pre">
        <svg viewBox="0 0 24 22" width="24" height="22"><path d="M7 0h7c2 0 2.500 1.500 3 4.500l-3 .5-4 9c-.6 1.500-1.500 3-3 3H3c-3 0-3.500-2-2.800-4.500l3-9C4 1 5 0 7 0z" fill="#2b86d8"/><path d="m2.500 5 8-.5-2.500 9c-1 2-2 3.500-5 3.500S-.5 14.500.2 12.500z" fill="#5fae6a"/><path d="m1 10.500 8-.5-1 3.500c-1 2-2 3.500-5 3.500S-.5 14.500.2 12.500z" fill="#f2c22e"/><path d="M14 7.500c.6-1.500 1.500-2.500 3-2.500h3c3 0 3.700 1.500 3 4.500L20 18h-9z" fill="#b565e8"/><path d="m12.500 11.500 10.300-1L20.500 18H10z" fill="#f0708a"/></svg>
        <em>PRE</em>
      </div>
    </div>
  </div>
</div>

{#snippet railIcons()}
  <svg viewBox="0 0 17 17" width="17" height="17" fill="none"><circle cx="6.500" cy="6.500" r="5.300" stroke="#777" stroke-width="2"/><path d="m10.500 10.500 5 5" stroke="#9a62d8" stroke-width="3"/></svg>
  <span>{@render pic('m365')}</span>
  <span>{@render pic('outlook')}</span>
  <i></i>
  <svg class="add" viewBox="0 0 12 12" width="12" height="12" stroke="#111" stroke-width="1.100"><path d="M6 0v12M0 6h12"/></svg>
  <i class="low"></i>
  <svg class="gear" viewBox="0 0 18 18" width="18" height="18" fill="none" stroke="#222" stroke-width="1.300" stroke-linejoin="round"><path d="M7.300 1h3.400l.6 2.600 1.700 1 2.600-.8 1.600 2.900-1.900 1.800v1.900l1.900 1.800-1.600 2.900-2.600-.8-1.700 1-.6 2.200H7.300l-.6-2.200-1.700-1-2.600.8-1.600-2.900 1.900-1.800V8.500L.8 6.700l1.600-2.900 2.600.8 1.700-1z"/><circle cx="9" cy="9.300" r="2.200"/></svg>
{/snippet}

<style>
  :global(body) { margin: 0; overflow: hidden; background: #f7f7f7; }
  .screen { width: 1366px; height: 768px; display: flex; flex-direction: column; background: #f7f7f7; font-family: "Open Sans", "Noto Sans", sans-serif; font-size: 12px; color: #111; overflow: hidden; }
  .screen * { box-sizing: border-box; }
  svg { display: block; flex: none; }
  span { white-space: nowrap; }
  h1, h2, h3, p, dl, dd { margin: 0; font-weight: 400; }
  em { font-style: normal; }
  button { font: inherit; padding: 0; display: flex; align-items: center; justify-content: center; background: #fff; border: 1px solid #767676; border-radius: 6px; color: #111; }

  .tabbar { height: 32px; background: #cdcdcd; display: flex; align-items: center; flex: none; }
  .profile { margin-left: 11px; }
  .spaces { margin-left: 20px; }
  .panel { margin-left: 25px; margin-right: 19px; }
  .mailtab { width: 20px; height: 20px; border-left: 1px solid #888; display: flex; align-items: center; padding-left: 2px; }
  .current { width: 21px; height: 32px; background: #f7f7f7; border-radius: 8px 8px 0 0; display: flex; align-items: center; justify-content: center; position: relative; padding-right: 1px; }
  .current::before, .current::after { content: ""; position: absolute; bottom: 0; width: 6px; height: 6px; }
  .current::before { left: -6px; background: radial-gradient(circle at 0 0, transparent 6px, #f7f7f7 6px); }
  .current::after { right: -6px; background: radial-gradient(circle at 100% 0, transparent 6px, #f7f7f7 6px); }
  .tab { width: 19px; height: 20px; border-right: 1px solid #7a7a7a; display: flex; align-items: center; justify-content: center; flex: none; }
  .tab.wide { width: 20px; }
  .tab svg { opacity: 0.5; }
  .tab.vivid svg { opacity: 1; }
  .zm { font: 700 8px "Open Sans", sans-serif; fill: #fff; }
  .plus { margin-left: 15px; }
  .wincontrols { margin-left: auto; margin-right: 18px; display: flex; gap: 36px; }

  .toolbar { height: 38px; display: flex; align-items: center; flex: none; }
  .back { margin-left: 20px; }
  .reload { margin-left: 28px; margin-right: 20px; }
  .address { width: 905px; height: 30px; border-radius: 15px; background: #fff; box-shadow: 0 0 2px #e2e2e2; display: flex; align-items: center; padding-left: 19px; }
  .url { margin-left: 16px; width: 783px; font-size: 14px; color: #717171; }
  .url b { font-weight: 400; color: #111; }
  .read { margin-right: 23px; }
  .tools { display: flex; align-items: center; margin-left: 20px; width: 291px; }
  .tools i { width: 1px; height: 16px; background: #ccc; margin-left: 16px; }
  .t2 { margin-left: 28px; }
  .t3 { margin-left: 16px; }
  .t4 { margin-left: 28px; }
  .t5 { margin-left: 27px; }
  .t6 { margin-left: 27px; }
  .t7 { margin-left: 26px; }
  .copilot { margin-left: 16px; }

  .favbar { height: 34px; display: flex; align-items: center; padding-bottom: 2px; flex: none; }
  .imp { display: flex; align-items: center; gap: 7px; margin-left: 12px; width: 125px; height: 16px; border-right: 1px solid #ccc; margin-right: 14px; }
  .fav { display: flex; align-items: center; gap: 8px; }

  .middle { height: 616px; display: flex; flex: none; }
  .page { width: 1318px; height: 613px; margin-left: 4px; background: #fff; border-radius: 8px; box-shadow: 0 0 2px #bbb; display: flex; overflow: hidden; position: relative; font-family: Inter, "Liberation Sans", sans-serif; font-size: 15px; flex: none; }
  aside { width: 280px; background: #f5f7f8; display: flex; flex-direction: column; flex: none; }
  .brand { display: flex; justify-content: space-between; align-items: center; margin: 47px 17px 0 48px; height: 25px; }
  h2 { margin: 51px 0 0 48px; height: 24px; line-height: 24px; font-size: 16px; font-weight: 450; }
  .navwrap { margin-top: 49px; display: flex; flex: 1; min-height: 0; }
  nav { flex: 1; overflow: hidden; }
  .item { height: 40px; margin-bottom: 24px; padding: 2px 4px 0 40px; border-left: 8px solid transparent; display: flex; align-items: center; justify-content: space-between; color: #555; font-weight: 350; }
  .item.active { border-left-color: #1bdbdb; color: #111; }
  .track { width: 15px; background: #fcfcfc; display: flex; flex-direction: column; align-items: center; flex: none; }
  .track .thumb { width: 9px; background: #8b8b8b; border-radius: 5px; }
  .small { padding-top: 8px; }
  .small .thumb { height: 235px; margin-top: 8px; }
  .big { padding-top: 8px; }
  .big .thumb { height: 418px; margin: 151px 0 13px; }

  main { flex: 1; padding: 0 68px; display: flex; flex-direction: column; overflow: hidden; }
  .domain { height: 385px; margin-top: -6px; border: 1px solid #d6d6d6; border-radius: 16px; padding: 24px; flex: none; }
  header { display: flex; height: 52px; align-items: center; gap: 8px; }
  header svg { margin: 0 10px 0 10px; }
  h1 { font-size: 20px; line-height: 24px; flex: 1; padding-top: 3px; font-weight: 350; }
  header button { height: 52px; font-weight: 450; padding-top: 4px; }
  .fwd { width: 154px; }
  .dns { width: 126px; color: #09757a; border-color: #09757a; }
  .set { width: 152px; background: #111; color: #fff; border-color: #111; }
  .boxes { display: grid; grid-template-columns: repeat(3, 1fr); gap: 10px; margin-top: 24px; }
  article { height: 263px; border: 1px solid #d4dbe0; border-radius: 6px; padding: 24px; }
  .head { height: 52px; border-bottom: 1px solid #d4dbe0; display: flex; justify-content: space-between; align-items: flex-start; }
  .head h3 { line-height: 40px; font-weight: 650; }
  .head button { height: 36px; font-weight: 450; padding-top: 3px; }
  .renew, .list { width: 109px; }
  dl { padding-top: 9px; }
  dl div { display: flex; justify-content: space-between; height: 39px; align-items: center; }
  dt { display: flex; align-items: center; gap: 5px; color: #767676; font-weight: 350; }
  dd { color: #000; font-weight: 370; }
  dd.on { font-weight: 600; margin-top: -2px; }
  .help { margin-top: -8px; }
  .secure { background: #ffeda9; border-color: #d98908; padding-left: 25px; }
  .title { display: flex; align-items: center; gap: 9px; height: 24px; padding-left: 1px; }
  .title h3 { font-weight: 650; padding-top: 3px; }
  .title h3, .head h3 { font-size: 15px; }
  .secure p { margin-top: 17px; font-weight: 350; }
  .line { display: block; height: 24px; line-height: 24px; }
  .up { width: 84px; height: 34px; margin: 18px 0 0 -1px; font-weight: 450; padding-top: 2px; }
  .est { margin-top: 17px; color: #767676; font-weight: 350; }
  .value { display: flex; align-items: flex-start; height: 40px; margin-top: 7px; }
  .value strong { font-size: 25px; line-height: 37px; font-weight: 350; color: #000; }
  .value small { font-size: 14.500px; line-height: 43px; margin-left: 4px; color: #767676; font-weight: 350; }
  .value svg { margin-top: 7px; margin-left: 1px; }
  .find { margin-top: 16px; height: 124px; background: #f5f7f8; border-radius: 16px; padding: 50px 30px 0; display: flex; flex: none; }
  .field { flex: 1; height: 44px; background: #fff; border: 1px solid #767676; border-right: 0; border-radius: 6px 0 0 6px; display: flex; align-items: center; padding: 3px 0 0 10px; color: #707070; font-weight: 350; }
  .go { width: 43px; height: 44px; background: #111; border-color: #111; border-radius: 6px 0 0 6px; margin-left: -6px; position: relative; padding-right: 1px; }
  .status { position: absolute; left: 0; top: 591px; width: 627px; height: 22px; background: #cdcdcd; padding-left: 5px; line-height: 22px; font-family: "Open Sans", "Noto Sans", sans-serif; font-size: 12px; color: #000; border-radius: 0 5px 0 0; }

  .rail { width: 44px; display: flex; flex-direction: column; align-items: center; flex: none; }
  .rail > svg:first-child { margin: -21px 0 24px; }
  .rail span { height: 16px; margin-bottom: 24px; }
  .rail i { width: 28px; height: 1px; background: #ccc; }
  .rail .add { margin-top: 26px; }
  .rail .low { margin-top: 432px; }
  .rail .gear { margin-top: 13px; }

  .taskbar { height: 48px; flex: none; display: flex; align-items: center; border-top: 1px solid #56494a; background: linear-gradient(90deg, #2d1d1c 0, #461516 80px, #451516 170px, #3b1b15 280px, #361d17 360px, #212224 450px, #212323 800px, #2a1d1d 850px, #401616 910px, #2d1d18 970px, #2d1a19 1130px, #3a1814 1250px, #351c14 100%); }
  .weather { margin-left: 19px; width: 234.500px; position: relative; padding-bottom: 6px; }
  .weather em { position: absolute; left: 17px; top: -1px; color: #fff; font-size: 11px; line-height: 17px; }
  .apps { display: flex; }
  .app { width: 40px; height: 40px; margin: 0 2px; border-radius: 4px; position: relative; display: flex; align-items: center; justify-content: center; padding-bottom: 1px; }
  .app::after { content: ""; position: absolute; bottom: 1px; left: 17px; width: 6px; height: 3px; border-radius: 2px; background: transparent; }
  .app.open::after { background: #999; }
  .app.active { background: #2f3031; }
  .app.active::after { left: 12px; width: 16px; background: #4cc2ff; }
  .app.alert { background: #4b2c2d; }
  .app.alert::after { background: #ff99a4; }
  .app em { position: absolute; left: 19px; top: 3px; width: 21px; height: 16px; border-radius: 8px; background: #4cc2ff; color: #111; font-size: 11px; line-height: 16px; text-align: center; }
  .app em.dark { width: 16px; left: 21px; background: #5b4038; color: #fff; }
  .app em.long { left: 16px; width: 26px; }
  .tray { margin-left: 68.500px; display: flex; align-items: center; color: #fff; height: 47px; flex: 1; }
  .sync { margin-left: 17px; }
  .c1 { margin-left: 16px; }
  .c2 { margin-left: 15px; }
  .kb { margin-left: 15px; }
  .lang { display: flex; flex-direction: column; align-items: center; line-height: 16px; margin-left: 18px; width: 24px; font-size: 11px; }
  .wifi { margin-left: 18px; }
  .vol { margin-left: 8px; }
  .bat { margin-left: 7px; }
  .clock { display: flex; flex-direction: column; align-items: flex-end; line-height: 16px; width: 79px; font-size: 11px; }
  .bell { margin-left: 8px; }
  .pre { margin-left: 17px; position: relative; }
  .pre em { position: absolute; left: 5px; top: 14px; width: 19px; height: 8px; background: #f5c514; color: #111; font-size: 7px; font-weight: 700; line-height: 8px; text-align: center; border-radius: 2px; }
</style>
